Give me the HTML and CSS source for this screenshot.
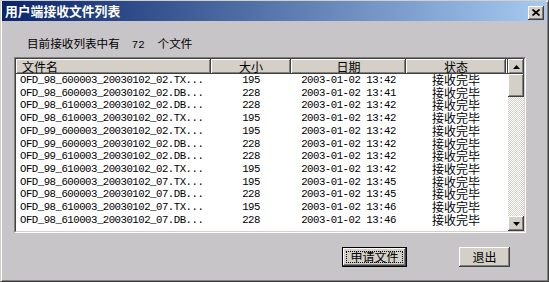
FILE: index.html
```html
<!DOCTYPE html>
<html lang="zh-CN">
<head>
  <meta charset="utf-8">
  <title>用户端接收文件列表</title>
  <meta name="viewport" content="width=device-width, initial-scale=1">
  <link rel="stylesheet" href="styles.css">
</head>
<body>
  <div class="window">
    <header class="titlebar">
      <span class="title">用户端接收文件列表</span>
      <button class="close" title="关闭">
        <svg width="8" height="7" viewBox="0 0 8 7"><path d="M0.5 0.5L7.5 6.5M7.5 0.5L0.5 6.5" stroke="#000" stroke-width="1.7" fill="none"/></svg>
      </button>
    </header>

    <main class="content">
      <p class="summary">目前接收列表中有<span class="count">72</span>个文件</p>

      <section class="listview">
        <div class="listview-frame">
          <div class="table">
            <div class="head">
              <span class="col-name">文件名</span>
              <span>大小</span>
              <span>日期</span>
              <span>状态</span>
              <span></span>
            </div>
            <div class="row"><span class="name">OFD_98_600003_20030102_02.TX...</span><span>195</span><span>2003-01-02 13:42</span><span class="state">接收完毕</span></div>
            <div class="row"><span class="name">OFD_98_600003_20030102_02.DB...</span><span>228</span><span>2003-01-02 13:41</span><span class="state">接收完毕</span></div>
            <div class="row"><span class="name">OFD_98_610003_20030102_02.DB...</span><span>228</span><span>2003-01-02 13:42</span><span class="state">接收完毕</span></div>
            <div class="row"><span class="name">OFD_98_610003_20030102_02.TX...</span><span>195</span><span>2003-01-02 13:42</span><span class="state">接收完毕</span></div>
            <div class="row"><span class="name">OFD_99_600003_20030102_02.TX...</span><span>195</span><span>2003-01-02 13:42</span><span class="state">接收完毕</span></div>
            <div class="row"><span class="name">OFD_99_600003_20030102_02.DB...</span><span>228</span><span>2003-01-02 13:42</span><span class="state">接收完毕</span></div>
            <div class="row"><span class="name">OFD_99_610003_20030102_02.DB...</span><span>228</span><span>2003-01-02 13:42</span><span class="state">接收完毕</span></div>
            <div class="row"><span class="name">OFD_99_610003_20030102_02.TX...</span><span>195</span><span>2003-01-02 13:42</span><span class="state">接收完毕</span></div>
            <div class="row"><span class="name">OFD_98_600003_20030102_07.TX...</span><span>195</span><span>2003-01-02 13:45</span><span class="state">接收完毕</span></div>
            <div class="row"><span class="name">OFD_98_600003_20030102_07.DB...</span><span>228</span><span>2003-01-02 13:45</span><span class="state">接收完毕</span></div>
            <div class="row"><span class="name">OFD_98_610003_20030102_07.TX...</span><span>195</span><span>2003-01-02 13:46</span><span class="state">接收完毕</span></div>
            <div class="row"><span class="name">OFD_98_610003_20030102_07.DB...</span><span>228</span><span>2003-01-02 13:46</span><span class="state">接收完毕</span></div>
          </div>

          <div class="scrollbar">
            <button class="sb-btn">
              <svg width="7" height="4" viewBox="0 0 7 4"><path d="M3.5 0L7 4H0z"/></svg>
            </button>
            <div class="thumb"></div>
            <div class="track"></div>
            <button class="sb-btn">
              <svg width="7" height="4" viewBox="0 0 7 4"><path d="M0 0H7L3.5 4z"/></svg>
            </button>
          </div>
        </div>
      </section>

      <footer class="actions">
        <button class="btn btn-default"><span class="focus">申请文件</span></button>
        <button class="btn btn-exit">退出</button>
      </footer>
    </main>
  </div>
</body>
</html>
```

FILE: styles.css
```css
* {
  margin: 0;
  padding: 0;
  box-sizing: border-box;
}

:root {
  /* Colors */
  --face: #c8c5c8;
  --button: #d4d0c8;
  --shadow: #808080;
  --dark: #404040;
  --light: #ffffff;

  --font-ui: "Noto Sans CJK SC", sans-serif;
  --font-list: "Liberation Mono", "Noto Sans CJK SC", monospace;
}

body {
  background: var(--face);
  color: #000;
  font-family: var(--font-ui);
  font-size: 12px;
  line-height: 1;
}

button {
  border: none;
  background: var(--button);
  font: inherit;
  color: inherit;
}

.window {
  width: 549px;
  height: 282px;
  display: flex;
  flex-direction: column;
  padding: 0 2px 2px 1px;

  background: var(--face);
  border: 1px solid;
  border-color: var(--button) var(--dark) var(--dark) var(--button);
  box-shadow: inset 1px 1px var(--light), inset -1px -1px var(--shadow);
}

.titlebar {
  display: flex;
  align-items: center;
  height: 20px;
  padding: 0 2px 0 3px;

  background: linear-gradient(to right, #0a246a, #a6caf0);
  color: #fff;
}

.title {
  flex: 1;
  font-size: 12.8px;
  font-weight: bold;
}

.close {
  display: flex;
  align-items: center;
  justify-content: center;
  width: 16px;
  height: 14px;
  margin-top: 3px;
  box-shadow: inset -1px -1px var(--dark), inset 1px 1px var(--light), inset -2px -2px var(--shadow);
}

.content {
  padding: 16px 0 0 12px;
}

.summary {
  padding-left: 13px;
  height: 12px;
  line-height: 12px;
  font-size: 11.6px;
}

.count {
  font-family: var(--font-list);
  font-size: 10.7px;
  margin: 0 13px 0 12px;
}

/* List view */
.listview {
  width: 512px;
  height: 176px;
  margin-top: 8px;
  border: 1px solid;
  border-color: var(--shadow) var(--light) var(--light) var(--shadow);
}

.listview-frame {
  display: flex;
  height: 100%;
  border: 1px solid;
  border-color: var(--dark) var(--button) var(--button) var(--dark);
}

.table {
  flex: 1;
  background: #fff;
  overflow: hidden;
}

.head,
.row {
  display: grid;
  grid-template-columns: 195px 80px 115px 100px 1fr;
}

.head {
  height: 15px;
}

.head span {
  line-height: 15px;
  text-align: center;
  background: var(--button);
  box-shadow: inset -1px -1px var(--dark), inset 1px 1px var(--light), inset -2px -2px var(--shadow);
}

.head .col-name {
  text-align: left;
  padding-left: 6px;
}

.row {
  height: 12.73px;
  line-height: 12.73px;
  font-family: var(--font-list);
  font-size: 10.7px;
  letter-spacing: -0.5px;
  text-align: center;
  white-space: nowrap;
}

.row .name {
  text-align: left;
  padding-left: 4px;
  overflow: hidden;
}

.row .state {
  font-family: var(--font-ui);
  font-size: 12px;
  letter-spacing: 0;
}

/* Scrollbar */
.scrollbar {
  display: flex;
  flex-direction: column;
  width: 16px;
}

.sb-btn,
.thumb {
  display: flex;
  align-items: center;
  justify-content: center;
  background: var(--button);
  box-shadow: inset -1px -1px var(--dark), inset 1px 1px var(--light), inset -2px -2px var(--shadow);
}

.sb-btn {
  height: 15px;
}

.thumb {
  height: 23px;
}

.track {
  flex: 1;
  background: repeating-conic-gradient(#fff 0 25%, var(--button) 0 50%) 0 0 / 2px 2px;
}

/* Buttons */
.actions {
  display: flex;
  justify-content: flex-end;
  gap: 52px;
  width: 512px;
  padding-right: 16px;
  margin-top: 14px;
}

.btn {
  height: 20px;
  display: flex;
  align-items: center;
  justify-content: center;
  box-shadow: inset -1px -1px var(--dark), inset 1px 1px var(--light), inset -2px -2px var(--shadow);
}

.btn-default {
  width: 65px;
  border: 1px solid #000;
}

.btn-exit {
  width: 51px;
}

.focus {
  display: flex;
  align-items: center;
  justify-content: center;
  width: 57px;
  height: 12px;
  border: 1px dotted #000;
}
```
